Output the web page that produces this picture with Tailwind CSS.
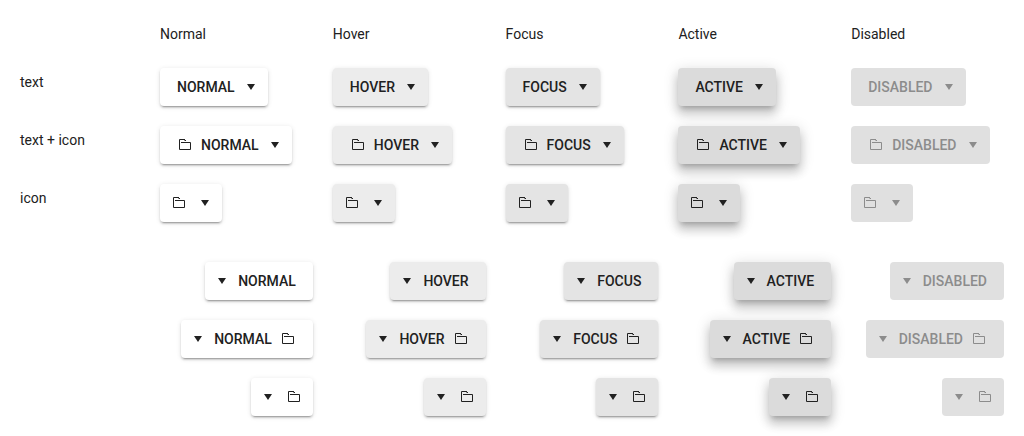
<!DOCTYPE html>
<html lang="en">
<head>
<meta charset="utf-8">
<title>Drop-down buttons</title>
<script src="https://cdn.jsdelivr.net/npm/@tailwindcss/browser@4"></script>
</head>
<body class="bg-white font-[Roboto,sans-serif] text-sm text-[#212121]">
<svg class="hidden" aria-hidden="true">
  <symbol id="folder" viewBox="0 0 16 16"><path fill="none" stroke="currentColor" d="M8 2.5H2.5V12.5H13.5V5.5H4M7.5 3.5H9"/></symbol>
  <symbol id="caret" viewBox="0 0 16 16"><path fill="currentColor" d="M4 5H12L8 11Z"/></symbol>
</svg>
<main id="sheet" class="grid grid-cols-[140px_repeat(5,1fr)] gap-y-5 pl-5 pt-6 pb-5"></main>
<script>
const states = [
  ['Normal', 'bg-white shadow-[0_3px_1px_-2px_#00000033,0_2px_2px_0_#00000024,0_1px_5px_0_#0000001f]'],
  ['Hover', 'bg-[#ececec] shadow-[0_3px_1px_-2px_#00000033,0_2px_2px_0_#00000024,0_1px_5px_0_#0000001f]'],
  ['Focus', 'bg-[#e4e4e4] shadow-[0_3px_1px_-2px_#00000033,0_2px_2px_0_#00000024,0_1px_5px_0_#0000001f]'],
  ['Active', 'bg-[#dbdbdb] shadow-[0_5px_5px_-3px_#00000033,0_8px_10px_1px_#00000024,0_3px_14px_2px_#0000001f]'],
  ['Disabled', 'bg-[#e0e0e0] text-[#8c8c8c]']
];
const icon = '<svg class="size-4 shrink-0" aria-hidden="true"><use href="#folder"/></svg>';
const caret = '<svg class="size-4 shrink-0" aria-hidden="true"><use href="#caret"/></svg>';
function button([name, look], kind, rtl) {
  const label = kind === 'icon' ? '' : `<span>${name.toUpperCase()}</span>`;
  const pic = kind === 'text' ? '' : icon;
  const pad = kind === 'icon' ? 'ps-[11px]' : 'ps-[17px]';
  const gap = kind === 'icon' ? 'gap-2.5' : 'gap-2';
  return `<div class="flex pr-5" dir="${rtl ? 'rtl' : 'ltr'}"><button type="button" aria-label="${name}" ${name === 'Disabled' ? 'disabled' : ''} class="flex h-[38px] items-center rounded-sm pe-[9px] font-medium ${pad} ${gap} ${look}">${pic}${label}${caret}</button></div>`;
}
let html = '<div></div>' + states.map(s => `<div class="mb-1 leading-5">${s[0]}</div>`).join('');
for (const rtl of [false, true])
  for (const kind of ['text', 'text + icon', 'icon']) {
    const space = rtl && kind === 'text' ? 'mt-5' : '';
    html += `<div class="${space} pt-1 leading-5">${rtl ? '' : kind}</div>`;
    html += states.map(s => `<div class="${space}">${button(s, kind, rtl)}</div>`).join('');
  }
document.getElementById('sheet').innerHTML = html;
</script>
</body>
</html>
